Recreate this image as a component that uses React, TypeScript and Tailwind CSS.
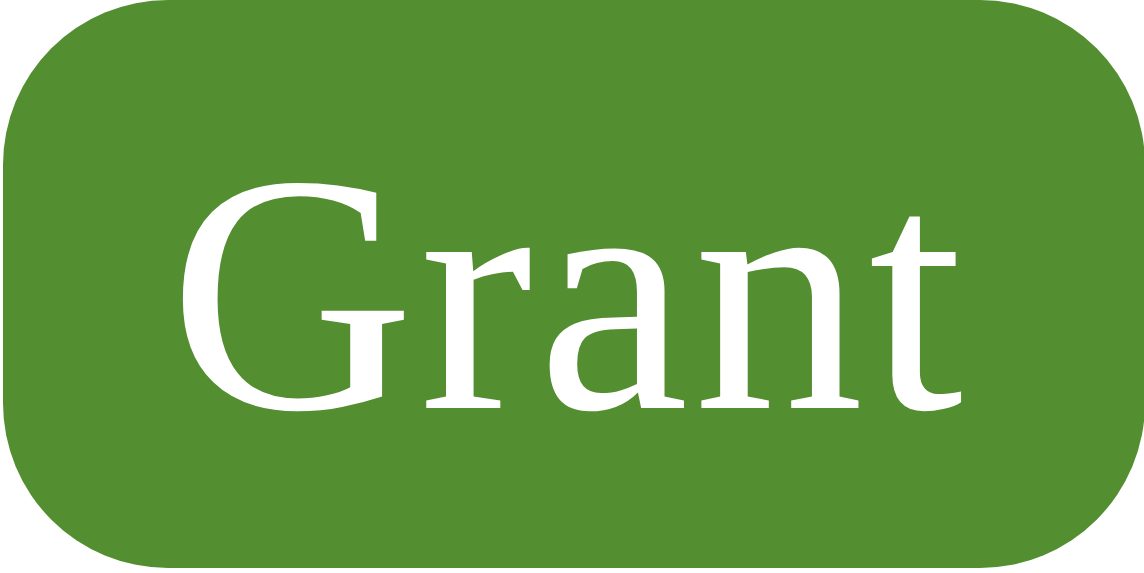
export default function App() {
  return (
    <div className="w-[1144px] h-[573px] bg-white overflow-hidden">
      <div className="ml-[3px] w-[1142px] h-[568px] rounded-[165px] bg-[#538e30] flex items-center justify-center pt-[20px]">
        <span
          className="text-white text-[340px] leading-none tracking-[5px] mr-[11px]"
          style={{ fontFamily: '"Liberation Serif", "Times New Roman", serif' }}
        >
          Grant
        </span>
      </div>
    </div>
  );
}
